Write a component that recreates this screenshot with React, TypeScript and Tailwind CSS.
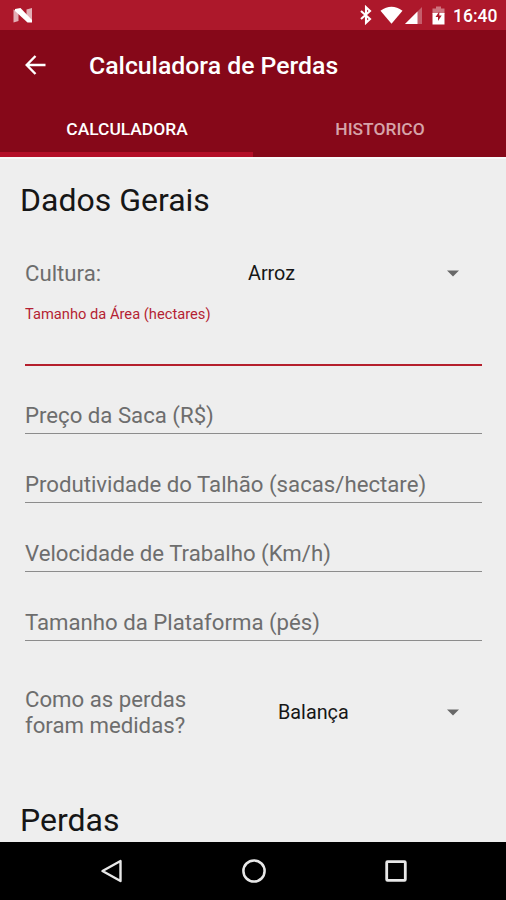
import React from "react";

interface SpinnerRowProps {
  label: React.ReactNode;
  value: string;
  className: string;
  labelClassName: string;
  valueClassName?: string;
}

const fields = [
  "Preço da Saca (R$)",
  "Produtividade do Talhão (sacas/hectare)",
  "Velocidade de Trabalho (Km/h)",
  "Tamanho da Plataforma (pés)",
];

const StatusBar = () => (
  <div className="flex h-[30px] shrink-0 items-center bg-[#ad182b] pl-3 pr-[9px] text-white">
    <svg className="h-[18px] w-[22px]" viewBox="0 0 22 18">
      <path d="M1.500 3.500v13l5-1.500V6z" fill="#fff" fillOpacity={0.65} />
      <path d="M14.500 3.500L20 2v13l-5.500-4z" fill="#fff" fillOpacity={0.65} />
      <path d="M3 3L8.500 2 20 14v2.500h-4.500L3 5z" fill="#fff" />
    </svg>
    <div className="flex-1" />
    <svg className="h-[20px] w-[13px]" viewBox="0 0 13 20">
      <path
        d="M2 6l9 8-4 3.800V2.200l4 3.800-9 8"
        fill="none"
        stroke="currentColor"
        strokeWidth={2.100}
      />
    </svg>
    <svg className="ml-[8px] h-[18px] w-[23px]" viewBox="0 0 24 18">
      <path d="M0.500 4.500Q12-3.500 23.500 4.500L12 18z" fill="currentColor" />
    </svg>
    <svg className="ml-0.5 h-[17px] w-[17px]" viewBox="0 0 17 17">
      <path d="M0 17L17 0v17z" fill="#fff" fillOpacity={0.3} />
      <path d="M0 17L12.500 4.500V17z" fill="currentColor" />
    </svg>
    <svg className="ml-[10px] h-[19px] w-[13px]" viewBox="0 0 13 19">
      <path d="M0.500 2.500H4V0.500h5v2h3.500V8H0.500z" fill="#fff" fillOpacity={0.4} />
      <path d="M0.500 7h12v11.500H0.500z" fill="currentColor" />
      <path d="M7.300 5.500L3.500 11H6v4l3.700-5.500H7.300z" fill="#ad182b" />
    </svg>
    <span className="ml-[8px] w-[44px] whitespace-nowrap pt-[2px] text-[17.500px] leading-5 font-medium">
      16:40
    </span>
  </div>
);

const SpinnerRow = ({
  label,
  value,
  className,
  labelClassName,
  valueClassName = "",
}: SpinnerRowProps) => (
  <div className={`flex items-center ${className}`}>
    <div className={`shrink-0 text-[22.200px] leading-[26px] text-[#6d6d6d] ${labelClassName}`}>
      {label}
    </div>
    <span className={`flex-1 text-[19.800px] text-[#161616] ${valueClassName}`}>{value}</span>
    <svg className="mr-[23px] h-[7px] w-[12px]" viewBox="0 0 12 7">
      <path d="M0 0.500h12L6 6.500z" fill="#686868" />
    </svg>
  </div>
);

const NavBar = () => (
  <div className="flex h-[58px] shrink-0 items-center bg-black pl-[100px] text-[#e8e8e8]">
    <svg className="h-[24px] w-[23px]" viewBox="0 0 23 24" fill="none" stroke="currentColor">
      <path d="M2.500 12L20.500 2v20z" strokeWidth={2.400} strokeLinejoin="round" />
    </svg>
    <svg className="ml-[118px] h-[26px] w-[26px]" viewBox="0 0 26 26" fill="none" stroke="currentColor">
      <circle cx={13} cy={13} r={10.600} strokeWidth={2.500} />
    </svg>
    <svg className="ml-[118px] h-[22px] w-[22px]" viewBox="0 0 22 22" fill="none" stroke="currentColor">
      <rect x={1.700} y={1.700} width={18.600} height={18.600} rx={0.800} strokeWidth={2.800} />
    </svg>
  </div>
);

export default function App() {
  return (
    <div className="flex h-[900px] w-[506px] flex-col overflow-hidden bg-[#eeeeee] font-['Roboto',sans-serif]">
      <StatusBar />

      {/* Toolbar */}
      <header className="flex h-[127px] shrink-0 flex-col bg-[#860819] text-white">
        <div className="flex h-[70px] items-center pl-[25px]">
          <svg
            className="h-[20px] w-[21px]"
            viewBox="0 0 21 20"
            fill="none"
            stroke="currentColor"
            strokeWidth={2.400}
          >
            <path d="M10.500 1L1.700 10l8.800 9M2 10h18.500" />
          </svg>
          <h1 className="ml-[43px] whitespace-nowrap pt-px text-[24.800px] font-medium">
            Calculadora de Perdas
          </h1>
        </div>

        {/* Tabs */}
        <div className="grid flex-1 grid-cols-2 text-center text-[17.400px] font-medium">
          <div className="border-b-[5px] border-[#b40f28] pt-[16px] pl-px leading-[27px]">
            CALCULADORA
          </div>
          <div className="pt-[16px] pl-px leading-[27px] text-[#d6a4a9]">HISTORICO</div>
        </div>
      </header>

      {/* Form */}
      <main className="flex-1 overflow-hidden border-t-2 border-[#f8f8f8]">
        <h2 className="mt-[21px] pl-[20px] text-[32px] leading-[40px] text-[#161616]">
          Dados Gerais
        </h2>

        <div className="pr-[24px] pl-[25px]">
          <SpinnerRow
            label="Cultura:"
            value="Arroz"
            className="mt-[39px] h-[28px]"
            labelClassName="w-[223px]"
            valueClassName="pt-[2px]"
          />

          <div className="mt-[17px] h-[62px] border-b-2 border-[#b51f2d] text-[14.700px] leading-[20px] text-[#b51f33]">
            Tamanho da Área (hectares)
          </div>

          <div className="-mt-px">
            {fields.map((field) => (
              <div
                key={field}
                className="flex h-[69px] items-end border-b border-[#8c8c8c] pb-[4px] text-[22.200px] leading-[28px] whitespace-nowrap text-[#6d6d6d]"
              >
                {field}
              </div>
            ))}
          </div>

          <SpinnerRow
            label={
              <>
                Como as perdas
                <br />
                foram medidas?
              </>
            }
            value="Balança"
            className="mt-[45px] h-[52px]"
            labelClassName="w-[253px]"
            valueClassName="pt-[2px]"
          />
        </div>

        <h2 className="mt-[62px] pl-[20px] text-[32px] leading-[40px] text-[#161616]">Perdas</h2>
      </main>

      <NavBar />
    </div>
  );
}
